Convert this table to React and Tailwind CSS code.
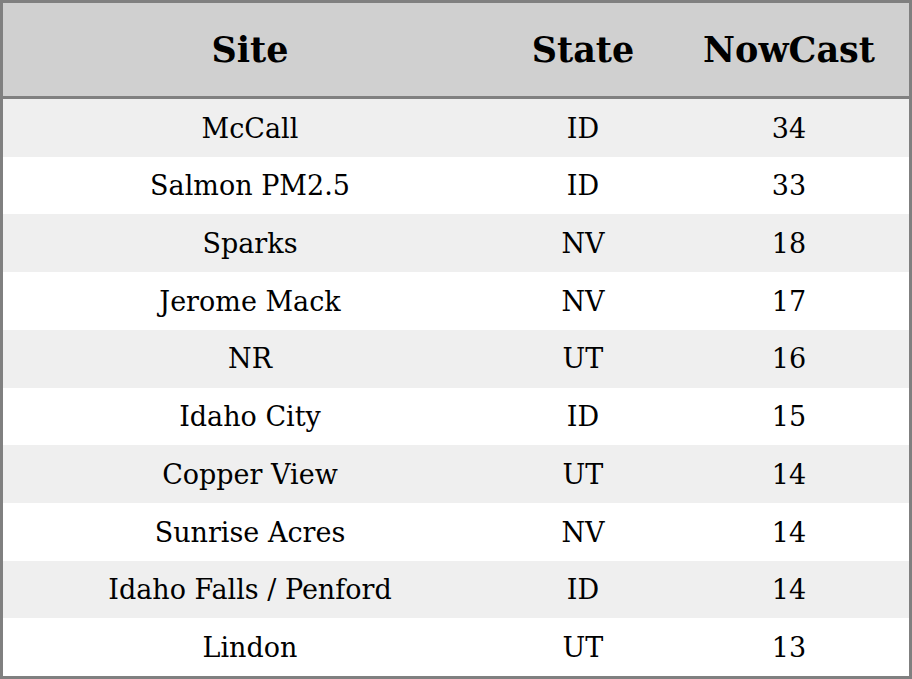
const rows = [
  { site: 'McCall', state: 'ID', nowcast: 34 },
  { site: 'Salmon PM2.5', state: 'ID', nowcast: 33 },
  { site: 'Sparks', state: 'NV', nowcast: 18 },
  { site: 'Jerome Mack', state: 'NV', nowcast: 17 },
  { site: 'NR', state: 'UT', nowcast: 16 },
  { site: 'Idaho City', state: 'ID', nowcast: 15 },
  { site: 'Copper View', state: 'UT', nowcast: 14 },
  { site: 'Sunrise Acres', state: 'NV', nowcast: 14 },
  { site: 'Idaho Falls / Penford', state: 'ID', nowcast: 14 },
  { site: 'Lindon', state: 'UT', nowcast: 13 },
]

const App = () => {
  return (
    <div className="w-[912px] h-[679px] flex flex-col border-[3px] border-[#808080] bg-white text-black font-['DejaVu_Serif',serif]">
      {/* Header */}
      <div className="flex h-[96px] shrink-0 pt-[2px] bg-[#d0d0d0] border-b-[3px] border-[#808080] text-[35px] font-bold">
        <div className="w-[494px] flex items-center justify-center">Site</div>
        <div className="w-[172px] flex items-center justify-center">State</div>
        <div className="flex-1 flex items-center justify-center">NowCast</div>
      </div>

      {/* Rows */}
      {rows.map((row, i) => (
        <div
          key={row.site}
          className={`flex flex-1 pt-[2px] text-[27px] ${i % 2 === 0 ? 'bg-[#efefef]' : 'bg-white'}`}
        >
          <div className="w-[494px] flex items-center justify-center">{row.site}</div>
          <div className="w-[172px] flex items-center justify-center">{row.state}</div>
          <div className="flex-1 flex items-center justify-center">{row.nowcast}</div>
        </div>
      ))}
    </div>
  )
}

export default App
